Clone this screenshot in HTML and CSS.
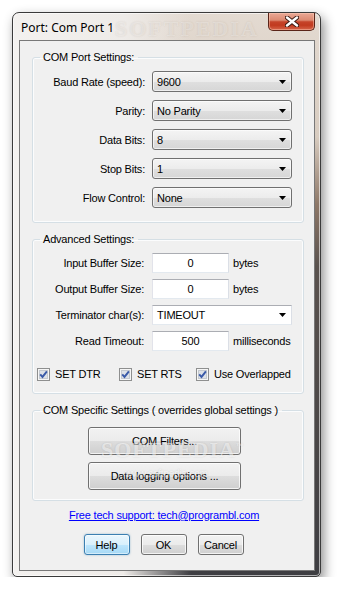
FILE: index.html
```html
<!DOCTYPE html>
<html lang="en">
<head>
    <meta charset="UTF-8">
    <meta name="viewport" content="width=device-width, initial-scale=1.0">
    <title>Port: Com Port 1</title>
    <link rel="stylesheet" href="styles.css">
</head>
<body>
    <div class="window">
        <div class="titlebar">
            <span class="title">Port: Com Port 1</span>
            <span class="title-mark">SOFTPEDIA</span>
            <button class="close" type="button">
                <svg width="14" height="11" viewBox="0 0 14 11">
                    <path d="M2 1.5L12 9.5M12 1.5L2 9.5" stroke="#3b1a12" stroke-width="4.4" stroke-linecap="round"/>
                    <path d="M2 1.5L12 9.5M12 1.5L2 9.5" stroke="#ffffff" stroke-width="2.4" stroke-linecap="round"/>
                </svg>
            </button>
        </div>

        <div class="client">
            <!-- COM port settings -->
            <fieldset class="group group-com">
                <legend>COM Port Settings:</legend>
                <div class="row">
                    <label>Baud Rate (speed):</label>
                    <div class="combo"><span>9600</span><svg class="arrow" width="7" height="4" viewBox="0 0 7 4"><path d="M0 0h7L3.5 4z"/></svg></div>
                </div>
                <div class="row">
                    <label>Parity:</label>
                    <div class="combo"><span>No Parity</span><svg class="arrow" width="7" height="4" viewBox="0 0 7 4"><path d="M0 0h7L3.5 4z"/></svg></div>
                </div>
                <div class="row">
                    <label>Data Bits:</label>
                    <div class="combo"><span>8</span><svg class="arrow" width="7" height="4" viewBox="0 0 7 4"><path d="M0 0h7L3.5 4z"/></svg></div>
                </div>
                <div class="row">
                    <label>Stop Bits:</label>
                    <div class="combo"><span>1</span><svg class="arrow" width="7" height="4" viewBox="0 0 7 4"><path d="M0 0h7L3.5 4z"/></svg></div>
                </div>
                <div class="row">
                    <label>Flow Control:</label>
                    <div class="combo"><span>None</span><svg class="arrow" width="7" height="4" viewBox="0 0 7 4"><path d="M0 0h7L3.5 4z"/></svg></div>
                </div>
            </fieldset>

            <!-- Advanced settings -->
            <fieldset class="group group-adv">
                <legend>Advanced Settings:</legend>
                <div class="adv-grid">
                    <label>Input Buffer Size:</label>
                    <div class="edit">0</div>
                    <span class="unit">bytes</span>

                    <label>Output Buffer Size:</label>
                    <div class="edit">0</div>
                    <span class="unit">bytes</span>

                    <label>Terminator char(s):</label>
                    <div class="combo combo-edit"><span>TIMEOUT</span><svg class="arrow" width="7" height="4" viewBox="0 0 7 4"><path d="M0 0h7L3.5 4z"/></svg></div>

                    <label>Read Timeout:</label>
                    <div class="edit">500</div>
                    <span class="unit">milliseconds</span>
                </div>
                <div class="checks">
                    <div class="check">
                        <svg class="box" width="13" height="13" viewBox="0 0 13 13"><rect x=".5" y=".5" width="12" height="12" fill="#f6f6f6" stroke="#8e8f8f"/><rect x="2.5" y="2.5" width="8" height="8" fill="#dde1e7" stroke="#c4c9d0"/><path d="M3.2 6.3l2.3 2.6 4.4-5.6" fill="none" stroke="#3a5aa8" stroke-width="1.9"/></svg>
                        <span>SET DTR</span>
                    </div>
                    <div class="check">
                        <svg class="box" width="13" height="13" viewBox="0 0 13 13"><rect x=".5" y=".5" width="12" height="12" fill="#f6f6f6" stroke="#8e8f8f"/><rect x="2.5" y="2.5" width="8" height="8" fill="#dde1e7" stroke="#c4c9d0"/><path d="M3.2 6.3l2.3 2.6 4.4-5.6" fill="none" stroke="#3a5aa8" stroke-width="1.9"/></svg>
                        <span>SET RTS</span>
                    </div>
                    <div class="check">
                        <svg class="box" width="13" height="13" viewBox="0 0 13 13"><rect x=".5" y=".5" width="12" height="12" fill="#f6f6f6" stroke="#8e8f8f"/><rect x="2.5" y="2.5" width="8" height="8" fill="#dde1e7" stroke="#c4c9d0"/><path d="M3.2 6.3l2.3 2.6 4.4-5.6" fill="none" stroke="#3a5aa8" stroke-width="1.9"/></svg>
                        <span>Use Overlapped</span>
                    </div>
                </div>
            </fieldset>

            <!-- COM specific settings -->
            <fieldset class="group group-specific">
                <legend>COM Specific Settings ( overrides global settings )</legend>
                <button class="btn btn-wide" type="button">COM Filters...</button>
                <button class="btn btn-wide" type="button">Data logging options ...</button>
                <span class="mark">SOFTPEDIA<sup>™</sup></span>
                <span class="mark-url">www.softpedia.com</span>
            </fieldset>

            <a class="support" href="#">Free tech support: tech@programbl.com</a>

            <div class="actions">
                <button class="btn btn-small btn-default" type="button">Help</button>
                <button class="btn btn-small" type="button">OK</button>
                <button class="btn btn-small" type="button">Cancel</button>
            </div>
        </div>
    </div>
</body>
</html>
```

FILE: styles.css
```css
body {
    margin: 0;
    background: #ffffff;
    font-family: "Liberation Sans", Arial, sans-serif;
    font-size: 11px;
    letter-spacing: -0.2px;
    color: #000;
}

/* window frame */
.window {
    position: relative;
    box-sizing: border-box;
    width: 309px;
    height: 565px;
    margin: 12px 0 0 12px;
    padding: 0 5px 5px 6px;
    display: flex;
    flex-direction: column;
    border: 1px solid #3a3a3a;
    border-radius: 7px 7px 5px 5px;
    background:
        linear-gradient(to right, #f3f1ef 0%, #eeebe8 36%, rgba(238,235,232,0) 58%),
        linear-gradient(to bottom, #e3dad1 0%, #d8ccc0 22%, #8e7868 34%, #5a524e 45%, #3e3e42 100%);
    box-shadow: 3px 5px 12px rgba(0,0,0,0.45), inset 0 0 0 1px rgba(255,255,255,0.6);
}

.titlebar {
    position: relative;
    height: 27px;
    display: flex;
    align-items: flex-start;
    justify-content: space-between;
}
.title {
    font-family: "Noto Sans", "Open Sans", sans-serif;
    font-size: 12px;
    letter-spacing: 0;
    line-height: 16px;
    padding: 7px 0 0 2px;
}
.title-mark {
    position: absolute;
    left: 96px;
    top: 3px;
    font-family: "Liberation Serif", serif;
    font-weight: bold;
    font-size: 22px;
    letter-spacing: 2px;
    color: rgba(255,255,255,0.32);
    text-shadow: 0 0 2px rgba(120,100,80,0.18);
}
.close {
    width: 47px;
    height: 18px;
    padding: 0;
    display: flex;
    align-items: center;
    justify-content: center;
    border: 1px solid #5a2418;
    border-top: none;
    border-radius: 0 0 5px 5px;
    background: linear-gradient(#eaa895 0%, #dc8a72 42%, #c5442a 52%, #c13a1f 72%, #d6654a 100%);
    box-shadow: inset 0 0 0 1px rgba(255,210,190,0.45);
    position: relative;
}

.client {
    flex: 1;
    display: flex;
    flex-direction: column;
    border: 1px solid #787878;
    background: #f0f0f0;
}

/* group boxes */
.group {
    position: relative;
    min-width: 0;
    margin: 10px 10px 0 12px;
    padding: 7px 11px 14px 4px;
    border: 1px solid #d5dfe5;
    border-radius: 3px;
    box-shadow: inset 0 0 0 1px #fbfcfd;
}
.group legend {
    margin-left: 3px;
    padding: 0 4px 0 3px;
    line-height: 13px;
}
.group-adv {
    padding-bottom: 12px;
}
.group-specific {
    padding: 10px 11px 10px 4px;
    display: flex;
    flex-direction: column;
    align-items: center;
    gap: 7px;
}

.row {
    display: flex;
    align-items: center;
    gap: 7px;
}
.row + .row {
    margin-top: 8px;
}
.row label {
    flex: 1;
    text-align: right;
}

.combo {
    box-sizing: border-box;
    width: 140px;
    height: 21px;
    display: flex;
    align-items: center;
    justify-content: space-between;
    padding: 0 5px 0 4px;
    border: 1px solid #707070;
    border-radius: 3px;
    background: linear-gradient(#f4f4f4 0%, #ececec 50%, #dfdfdf 51%, #d6d6d6 100%);
    box-shadow: inset 0 0 0 1px rgba(255,255,255,0.6);
}
.combo-edit {
    grid-column: 2 / 4;
    height: 20px;
    border: 1px solid #abadb3;
    border-color: #abadb3 #dbdfe6 #e3e9ef #e2e3ea;
    border-radius: 0;
    background: #ffffff;
    box-shadow: none;
}
.arrow {
    fill: #000;
}

.adv-grid {
    display: grid;
    grid-template-columns: 1fr 77px 63px;
    grid-auto-rows: 20px;
    row-gap: 6px;
    align-items: center;
}
.adv-grid label {
    text-align: right;
    padding-right: 8px;
}
.edit {
    box-sizing: border-box;
    height: 20px;
    line-height: 18px;
    text-align: center;
    background: #ffffff;
    border: 1px solid #abadb3;
    border-color: #abadb3 #dbdfe6 #e3e9ef #e2e3ea;
}
.unit {
    padding-left: 4px;
}

.checks {
    display: grid;
    grid-template-columns: 82px 77px auto;
    margin-top: 17px;
    line-height: 13px;
}
.check {
    display: flex;
    align-items: center;
    gap: 5px;
}
.box {
    display: block;
}

/* buttons */
.btn {
    box-sizing: border-box;
    padding: 0;
    font: inherit;
    letter-spacing: inherit;
    color: #000;
    border: 1px solid #707070;
    border-radius: 3px;
    background: linear-gradient(#f2f2f2 0%, #ebebeb 50%, #dddddd 51%, #cfcfcf 100%);
    box-shadow: inset 0 0 0 1px rgba(255,255,255,0.75);
}
.btn-wide {
    width: 153px;
    height: 28px;
}
.btn-small {
    width: 46px;
    height: 21px;
}
.btn-default {
    border-color: #3c7fb1;
    background: linear-gradient(#eaf6fd 0%, #d9f0fc 50%, #bee6fd 51%, #a7d9f5 100%);
    box-shadow: inset 0 0 0 1px rgba(255,255,255,0.5), 0 0 2px rgba(60,127,177,0.5);
}

/* watermark over the filter buttons */
.mark {
    position: absolute;
    left: 68px;
    top: 20px;
    font-family: "Liberation Serif", serif;
    font-weight: bold;
    font-size: 22px;
    letter-spacing: 1px;
    color: rgba(255,255,255,0.55);
    text-shadow: 0 0 2px rgba(0,0,0,0.12);
    pointer-events: none;
}
.mark sup {
    font-size: 8px;
    font-family: "Liberation Sans", sans-serif;
}
.mark-url {
    position: absolute;
    left: 92px;
    top: 51px;
    font-size: 10px;
    color: rgba(255,255,255,0.6);
    text-shadow: 0 0 2px rgba(0,0,0,0.15);
    pointer-events: none;
}

.support {
    align-self: center;
    margin: 8px 6px 0 0;
    line-height: 13px;
    color: #0000ff;
    text-decoration: underline;
}

.actions {
    display: flex;
    justify-content: center;
    gap: 11px;
    margin-top: 12px;
    padding-right: 7px;
}
```
